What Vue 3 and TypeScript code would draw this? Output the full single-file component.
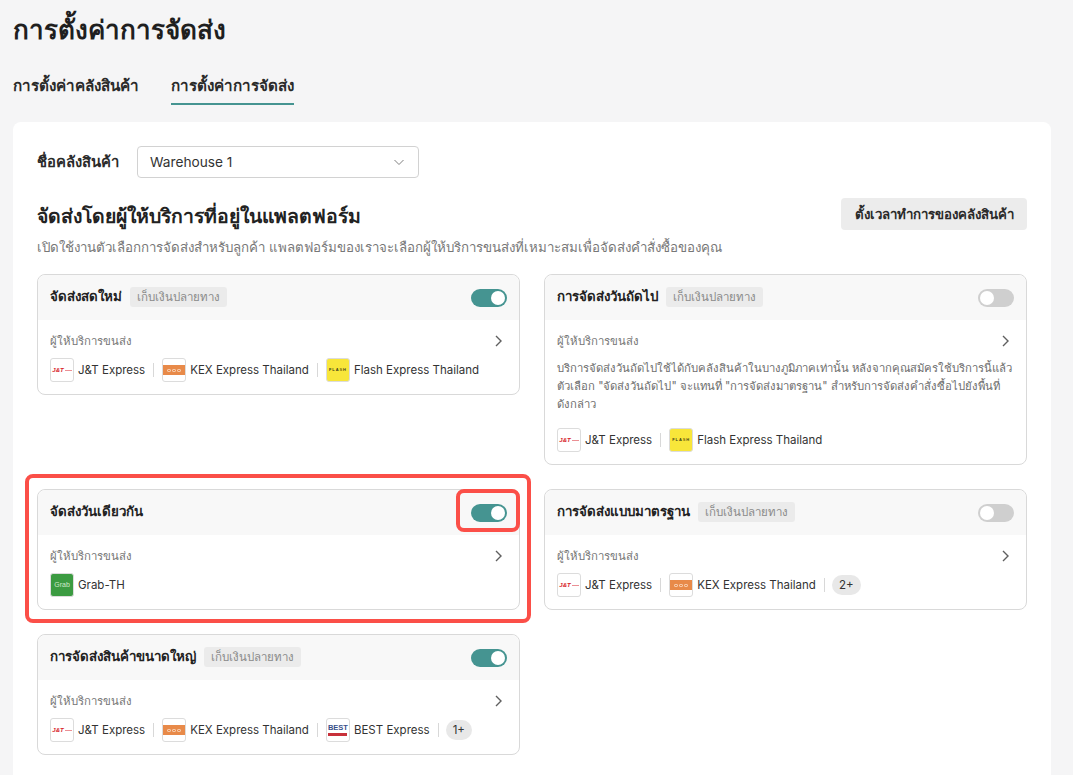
<script setup lang="ts">
interface Carrier { name: string; logo: 'jt' | 'kex' | 'flash' | 'grab' | 'best' }
interface Service { title: string; cod: boolean; on: boolean; note?: string; carriers: Carrier[]; more?: string; mark?: boolean }
const jt: Carrier = { name: 'J&T Express', logo: 'jt' }
const kex: Carrier = { name: 'KEX Express Thailand', logo: 'kex' }
const flash: Carrier = { name: 'Flash Express Thailand', logo: 'flash' }
const services: Service[] = [
  { title: 'จัดส่งสดใหม่', cod: true, on: true, carriers: [jt, kex, flash] },
  { title: 'การจัดส่งวันถัดไป', cod: true, on: false, note: 'บริการจัดส่งวันถัดไปใช้ได้กับคลังสินค้าในบางภูมิภาคเท่านั้น หลังจากคุณสมัครใช้บริการนี้แล้ว ตัวเลือก "จัดส่งวันถัดไป" จะแทนที่ "การจัดส่งมาตรฐาน" สำหรับการจัดส่งคำสั่งซื้อไปยังพื้นที่ดัง\u2060กล่าว', carriers: [jt, flash] },
  { title: 'จัดส่งวันเดียวกัน', cod: false, on: true, mark: true, carriers: [{ name: 'Grab-TH', logo: 'grab' }] },
  { title: 'การจัดส่งแบบมาตรฐาน', cod: true, on: false, carriers: [jt, kex], more: '2+' },
  { title: 'การจัดส่งสินค้าขนาดใหญ่', cod: true, on: true, carriers: [jt, kex, { name: 'BEST Express', logo: 'best' }], more: '1+' },
]
</script>

<template>
  <div class="page">
    <h1 class="title">การตั้งค่าการจัดส่ง</h1>
    <nav class="tabs">
      <span class="tab">การตั้งค่าคลังสินค้า</span>
      <span class="tab active">การตั้งค่าการจัดส่ง</span>
    </nav>
    <section class="panel">
      <div class="warehouse">
        <span class="wh-label">ชื่อคลังสินค้า</span>
        <div class="select">
          <span>Warehouse 1</span>
          <svg width="14" height="14" viewBox="0 0 14 14" fill="none" stroke="#808080" stroke-width="1"><path d="M2.5 5l4.5 4.5L11.500 5" /></svg>
        </div>
      </div>
      <div class="heading-row">
        <h2 class="heading">จัดส่งโดยผู้ให้บริการที่อยู่ในแพลตฟอร์ม</h2>
        <button class="hours">ตั้งเวลาทำการของคลังสินค้า</button>
      </div>
      <p class="desc">เปิดใช้งานตัวเลือกการจัดส่งสำหรับลูกค้า แพลตฟอร์มของเราจะเลือกผู้ให้บริการขนส่งที่เหมาะสมเพื่อจัดส่งคำสั่งซื้อของคุณ</p>
      <div class="grid">
        <article v-for="s in services" :key="s.title" class="card">
          <header class="card-head">
            <span class="card-title">{{ s.title }}</span>
            <span v-if="s.cod" class="tag">เก็บเงินปลายทาง</span>
            <span class="switch" :class="{ on: s.on }"><i class="knob"></i></span>
            <span v-if="s.mark" class="mark-switch"></span>
          </header>
          <div class="card-body">
            <div class="prov-row">
              <span class="prov">ผู้ให้บริการขนส่ง</span>
              <svg width="16" height="16" viewBox="0 0 16 16" fill="none" stroke="#5f5f5f" stroke-width="1.4"><path d="M5 3l5 5-5 5" /></svg>
            </div>
            <p v-if="s.note" class="note">{{ s.note }}</p>
            <div class="carriers" :class="{ spaced: s.note }">
              <template v-for="(c, i) in s.carriers" :key="c.name">
                <span v-if="i > 0" class="sep"></span>
                <span class="carrier">
                  <span class="logo" :class="c.logo">
                    <span v-if="c.logo === 'jt'" class="jt-mark">J&amp;T<i></i></span>
                    <span v-else-if="c.logo === 'kex'" class="kex-mark"><i></i><i></i><i></i></span>
                    <span v-else-if="c.logo === 'flash'" class="flash-mark">FLA<b>S</b>H</span>
                    <span v-else-if="c.logo === 'grab'" class="grab-mark">Grab</span>
                    <span v-else class="best-mark">BEST<i></i></span>
                  </span>
                  <span class="cname">{{ c.name }}</span>
                </span>
              </template>
              <template v-if="s.more">
                <span class="sep"></span>
                <span class="more">{{ s.more }}</span>
              </template>
            </div>
          </div>
          <span v-if="s.mark" class="mark-card"></span>
        </article>
      </div>
    </section>
  </div>
</template>

<style>
html, body { margin: 0; background: #f5f5f6; overflow: hidden; }
</style>

<style scoped>
.page {
  height: 775px;
  overflow: hidden;
  box-sizing: border-box;
  padding: 12px 22px 0 13px;
  background: #f5f5f6;
  font-family: Inter, "Noto Sans", "Liberation Sans", sans-serif;
  color: #222;
}
.title { margin: 0; font-size: 26px; line-height: 36px; font-weight: 700; color: #1f1f1f; }
.tabs { display: flex; gap: 32px; margin-top: 20px; height: 38px; }
.tab { font-size: 15.2px; font-weight: 600; line-height: 22px; padding-top: 7px; height: 37px; box-sizing: border-box; color: #2a2a2a; }
.tab.active { border-bottom: 2px solid #459491; }
.panel { margin-top: 16px; background: #fff; border-radius: 8px; padding: 24px 24px 40px; }
.warehouse { display: flex; align-items: center; gap: 17px; height: 32px; }
.wh-label { font-size: 14.8px; font-weight: 600; color: #2a2a2a; width: 83px; white-space: nowrap; }
.select {
  width: 282px; height: 32px; box-sizing: border-box; border: 1px solid #d2d2d2; border-radius: 4px;
  display: flex; align-items: center; justify-content: space-between; padding: 0 12px; font-size: 13.7px; color: #333;
}
.heading-row { display: flex; justify-content: space-between; align-items: center; margin-top: 20px; height: 32px; }
.heading { margin: 0; padding-top: 4px; font-size: 19.4px; line-height: 28px; font-weight: 700; color: #222; }
.hours {
  width: 186px; height: 32px; border: 0; border-radius: 4px; background: #ececec;
  font: 600 13.25px Inter, "Noto Sans", sans-serif; color: #2a2a2a; padding: 0;
}
.desc { margin: 8px 0 0; font-size: 13.3px; line-height: 18px; color: #777; white-space: nowrap; }
.grid { display: grid; grid-template-columns: 483px 483px; column-gap: 24px; row-gap: 24px; align-items: start; margin-top: 18px; }
.card { position: relative; border: 1px solid #d9d9d9; border-radius: 8px; }
.card-head {
  position: relative; display: flex; align-items: center; gap: 8px; height: 45px; padding: 0 12px;
  background: #f8f8f8; border-radius: 8px 8px 0 0;
}
.card-title { font-size: 13.3px; font-weight: 700; color: #222; white-space: nowrap; padding-bottom: 2px; }
.tag { background: #ebebeb; color: #8a8a8a; font-size: 11.5px; line-height: 20px; height: 20px; padding: 0 7px; border-radius: 3px; white-space: nowrap; margin-top: -2px; }
.switch { margin-left: auto; width: 36px; height: 18px; border-radius: 9px; background: #cfcfcf; position: relative; flex: none; }
.switch.on { background: #459491; }
.knob { position: absolute; left: 2px; top: 2px; width: 14px; height: 14px; border-radius: 50%; background: #fff; }
.switch.on .knob { left: 20px; }
.mark-switch { position: absolute; right: -1px; top: -1px; width: 64px; height: 43px; box-sizing: border-box; border: 4px solid #fb4f48; border-radius: 8px; }
.mark-card { position: absolute; left: -13px; right: -12px; top: -16px; bottom: -14px; border: 4px solid #fb4f48; border-radius: 8px; pointer-events: none; }
.card-body { padding: 12px; }
.prov-row { display: flex; align-items: center; justify-content: space-between; height: 18px; }
.prov { font-size: 11.4px; line-height: 18px; color: #767676; }
.note { margin: 9px 0 0; font-size: 11.3px; line-height: 18px; color: #6e6e6e; }
.carriers { display: flex; align-items: center; margin-top: 8px; height: 24px; }
.carriers.spaced { margin-top: 15px; }
.carrier { display: flex; align-items: center; gap: 4px; }
.cname { font-size: 11.5px; color: #333; white-space: nowrap; }
.sep { width: 1px; height: 14px; background: #d8d8d8; margin: 0 8px; }
.more { background: #e8e8e8; border-radius: 10px; font-size: 11.5px; color: #333; height: 20px; line-height: 20px; padding: 0 7px; margin-left: -1px; }
.logo {
  width: 24px; height: 24px; box-sizing: border-box; border: 1px solid #dcdcdc; border-radius: 3px; background: #fff;
  display: flex; align-items: center; justify-content: center; overflow: hidden; flex: none;
}
.logo.flash { background: #f8e63a; }
.logo.grab { background: #3b9b41; }
.jt-mark { display: flex; align-items: center; gap: 1px; font: italic 800 6px/6px "Liberation Sans", sans-serif; color: #d8222a; }
.jt-mark i { width: 7px; height: 1px; background: #d8222a; opacity: 0.5; }
.kex-mark { display: flex; justify-content: center; align-items: center; gap: 1px; width: 22px; height: 10px; background: #e88a49; }
.kex-mark i { width: 4px; height: 3px; border: 1px solid #f6c9a7; border-radius: 1px; box-sizing: border-box; }
.flash-mark { font: 800 4px/6px "Liberation Sans", sans-serif; color: #3a3a1a; letter-spacing: 0.9px; }
.flash-mark b { color: #7a6a10; }
.grab-mark { font: 400 7px/8px "Liberation Sans", sans-serif; color: #cfe9c9; }
.best-mark { display: flex; flex-direction: column; align-items: center; font: 700 7.5px/8px "Liberation Sans", sans-serif; color: #38508a; }
.best-mark i { width: 19px; height: 3px; background: #c8313a; margin-top: 1px; }
</style>
